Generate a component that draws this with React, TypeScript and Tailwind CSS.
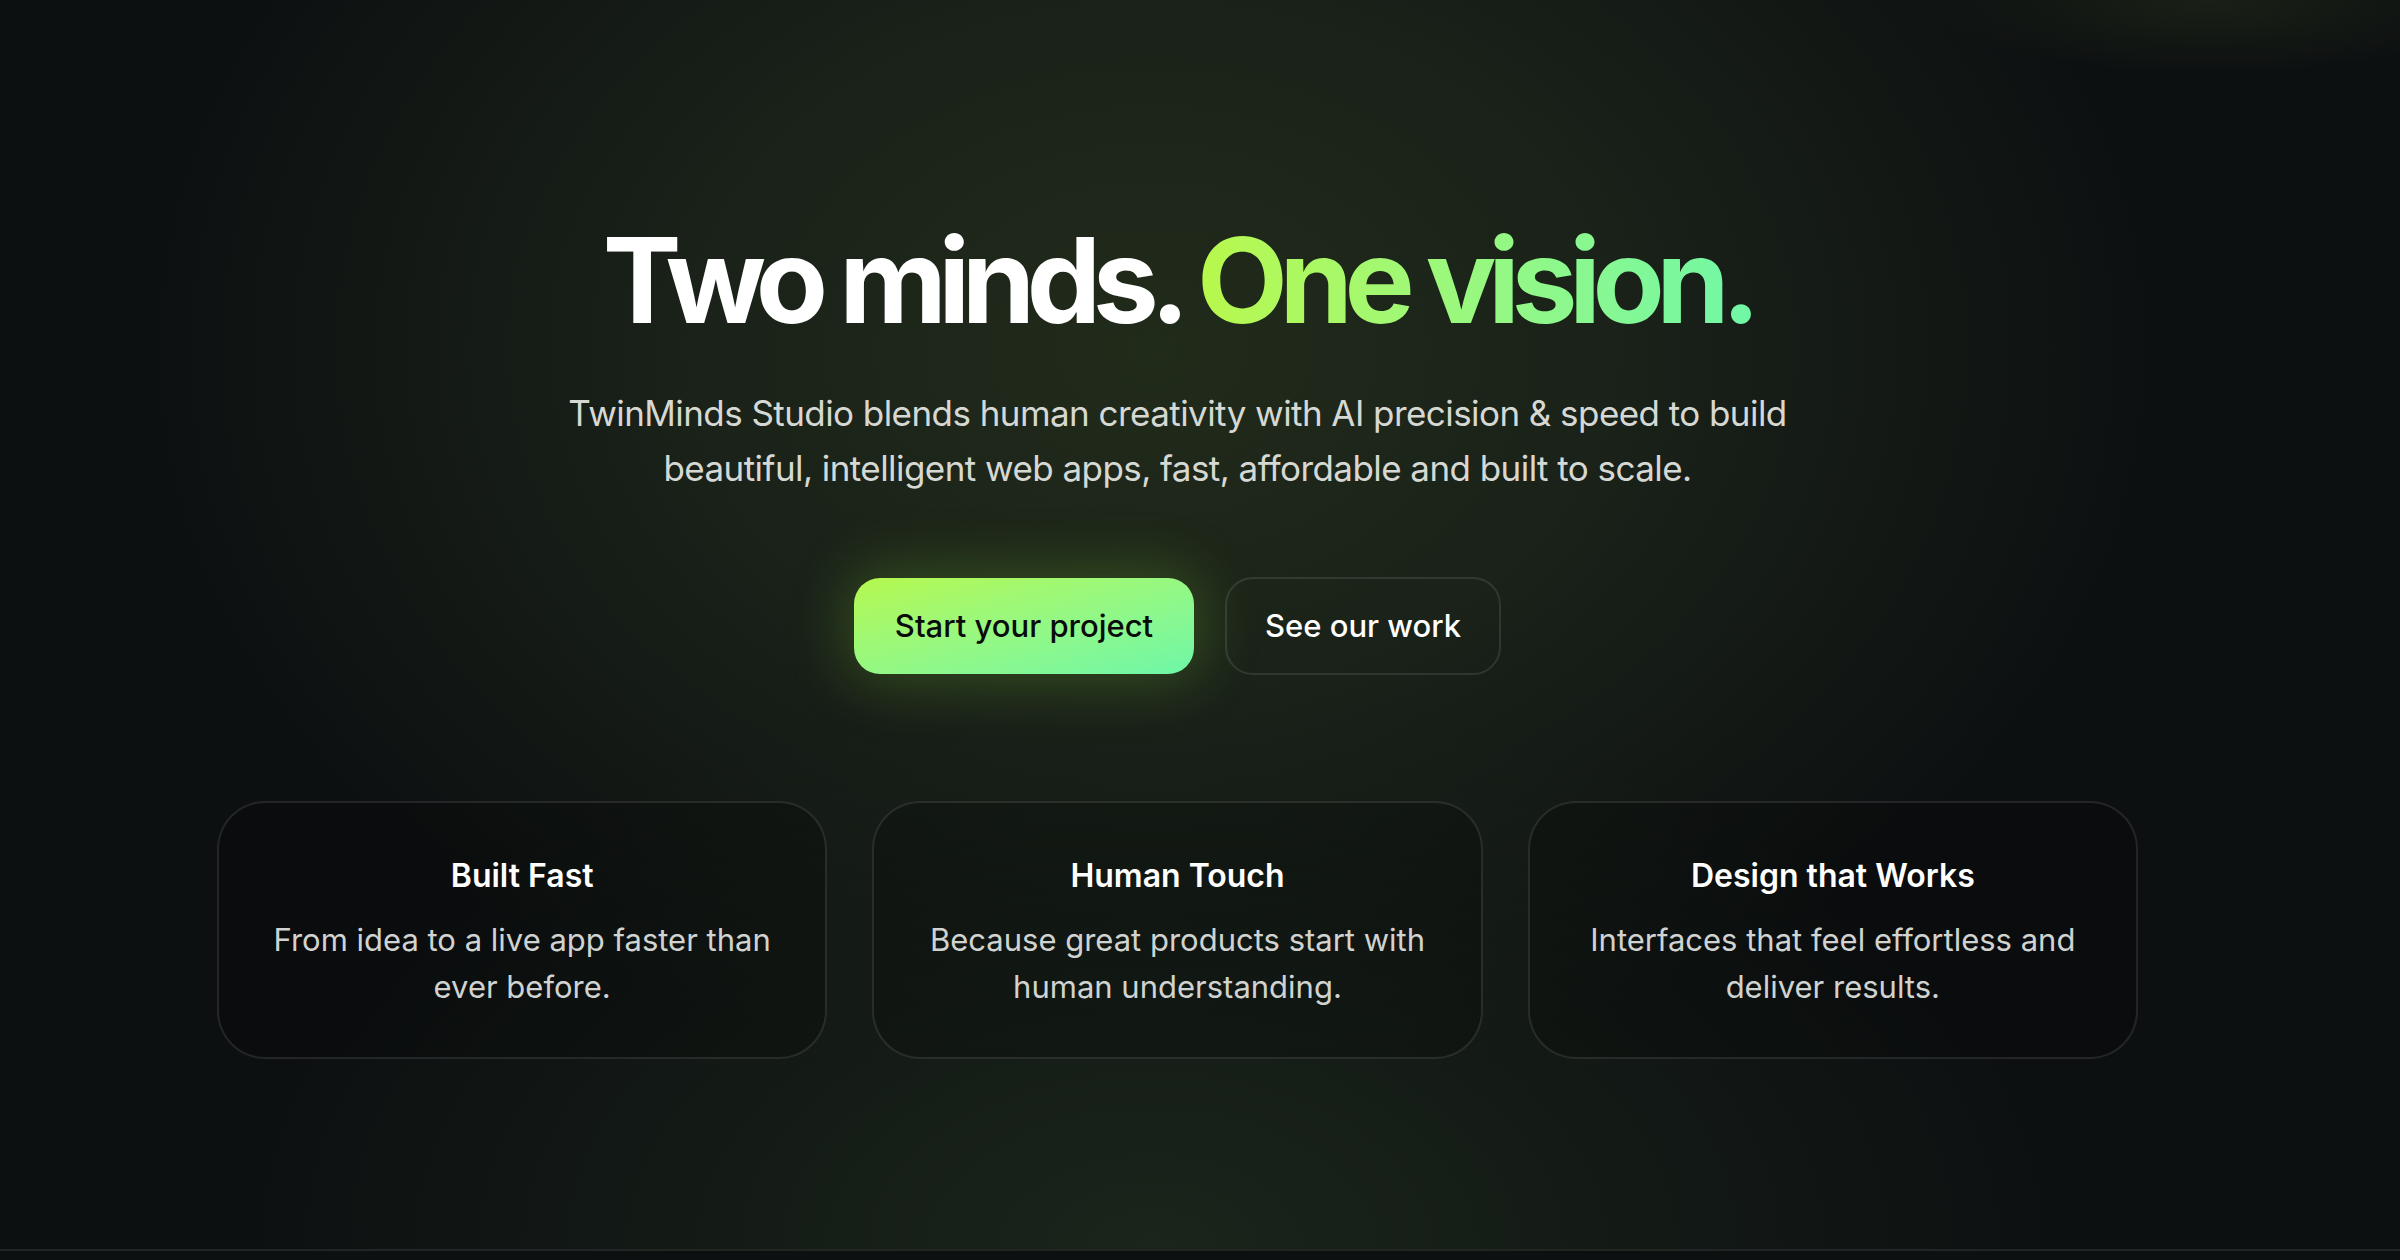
import React from "react"

const features = [
  {
    title: "Built Fast",
    description: "From idea to a live app faster than ever before.",
  },
  {
    title: "Human Touch",
    description: "Because great products start with human understanding.",
  },
  {
    title: "Design that Works",
    description: "Interfaces that feel effortless and deliver results.",
  },
]

export default function App() {
  return (
    <div className="min-h-[1260px] w-full bg-[#0d1011] font-['Inter',sans-serif] text-white">
      <section className="min-h-[1250px] border-b-2 border-[#222524] bg-[radial-gradient(ellipse_42%_60%_at_48%_28%,#212b1a_0%,#1a2219_45%,transparent_100%),radial-gradient(ellipse_38%_45%_at_48%_100%,#1a251b_0%,transparent_100%),radial-gradient(ellipse_12%_6%_at_92%_0%,#1a2016_0%,transparent_100%)] pb-[190px] pr-[45px] pt-[221px]">
        <div className="mx-auto flex w-[1921px] flex-col items-center">
          <h1 className="text-[118px] font-bold leading-none tracking-[-0.072em]">
            Two minds.{" "}
            <span className="bg-gradient-to-r from-[#b8f84a] to-[#70f7a6] bg-clip-text text-transparent">
              One vision.
            </span>
          </h1>

          <p className="mt-[47px] max-w-[1260px] text-center text-[35px] leading-[55px] tracking-[-0.016em] text-[#d6d8d4]">
            TwinMinds Studio blends human creativity with AI precision &amp; speed to build beautiful,
            intelligent web apps, fast, affordable and built to scale.
          </p>

          <div className="mt-[81px] flex items-center gap-[31px]">
            <button className="flex h-[96px] w-[340px] items-center justify-center rounded-[26px] bg-gradient-to-br from-[#b5f84c] to-[#6df7a8] text-[31px] font-medium text-[#0a0c0a] shadow-[0_0_60px_8px_rgba(150,230,60,0.22)]">
              Start your project
            </button>
            <button className="flex h-[98px] w-[276px] items-center justify-center rounded-[28px] border-2 border-white/10 text-[31px] font-medium text-white">
              See our work
            </button>
          </div>

          <div className="mt-[126px] grid w-full grid-cols-3 gap-[45px]">
            {features.map((f) => (
              <div
                key={f.title}
                className="flex h-[258px] flex-col items-center rounded-[48px] border-2 border-white/10 bg-black/20 px-[50px] pt-[53px] text-center"
              >
                <h3 className="text-[32px] font-semibold leading-[40px] text-white">
                  {f.title}
                </h3>
                <p className="mt-[20px] text-[31px] leading-[47px] text-[#d0d3d0]">
                  {f.description}
                </p>
              </div>
            ))}
          </div>
        </div>
      </section>
    </div>
  )
}
